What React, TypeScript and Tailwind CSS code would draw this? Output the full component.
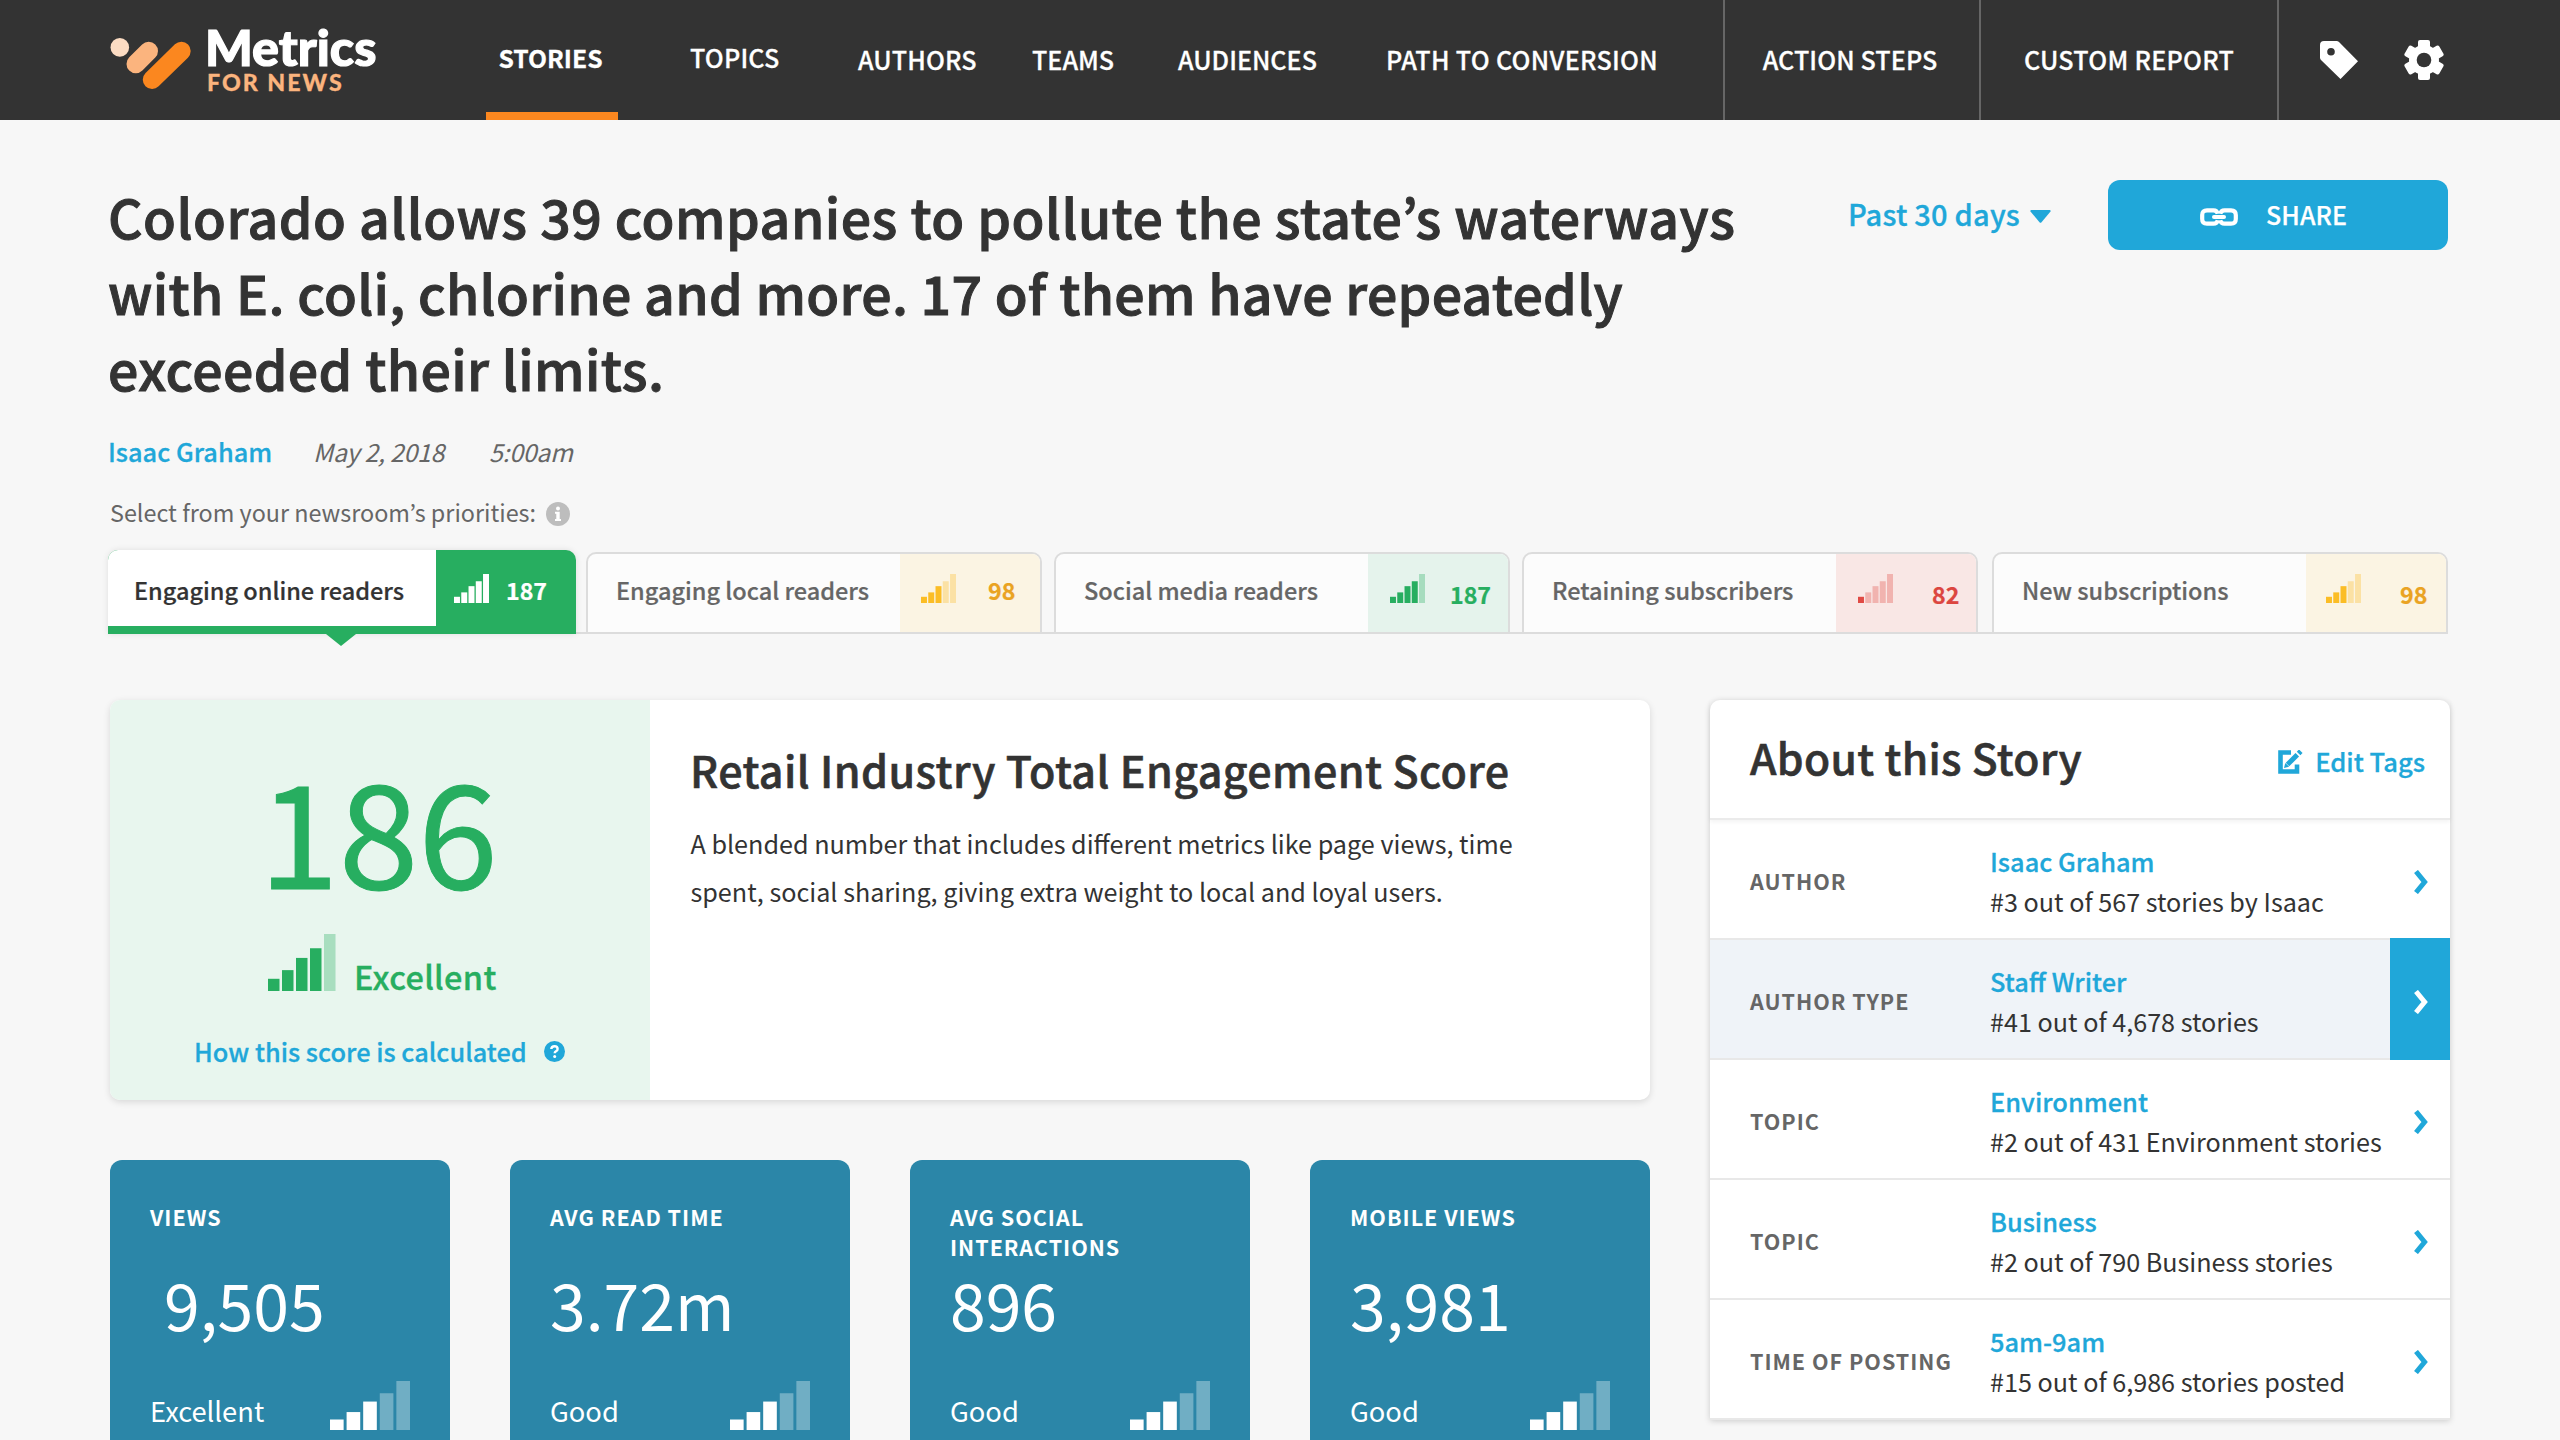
import type { ReactNode } from "react";

const BAR_HEIGHTS = [12, 20.5, 32.5, 42, 56];

// Sits between the medium and bold cuts of the family.
const SEMI = "font-medium [-webkit-text-stroke-width:0.01em] ";

function Bars({ filled, className }: { filled: number; className: string }) {
  return (
    <svg viewBox="0 0 67.5 56" preserveAspectRatio="none" className={"shrink-0 " + className} fill="currentColor">
      {BAR_HEIGHTS.map((h, i) => (
        <rect key={i} x={i * 14} y={56 - h} width="11.5" height={h} opacity={i < filled ? 1 : 0.33} />
      ))}
    </svg>
  );
}

function Logo() {
  return (
    <div className="flex w-[486px] pl-[110px]">
      <svg className="mt-[38px] h-[52px] w-[82px]" viewBox="0 0 82 52" strokeLinecap="round" strokeWidth="18.6">
        <circle cx="9.8" cy="9.4" r="9.3" fill="#fcdcc3" />
        <path d="M38.7 13 L25.8 25.9" stroke="#fbb47e" />
        <path d="M71.4 13 L42.1 41.7" stroke="#fb871f" />
      </svg>
      <div className="ml-[13px] mt-[25px] font-['Lato',sans-serif]">
        <div className="text-[50.3px] font-black leading-[44px] text-white [-webkit-text-stroke-width:1.2px]">Metrics</div>
        <div className="mt-px pl-[2px] text-[23.2px] font-black leading-[24px] tracking-[2px] text-[#fbb47e]">FOR NEWS</div>
      </div>
    </div>
  );
}

function TagIcon() {
  return (
    <svg className="h-[38px] w-[38px]" viewBox="0 0 38 38">
      <path
        fillRule="evenodd"
        fill="#fff"
        d="M4 0H16.500Q18 0 19 1L38 20.300 20.500 38 1 19Q0 18 0 16.500V4Q0 0 4 0ZM11 7a3.800 3.800 0 1 0 0 7.600a3.800 3.800 0 1 0 0-7.600Z"
      />
    </svg>
  );
}

function GearIcon() {
  return (
    <svg className="h-[40px] w-[40px]" viewBox="-20 -20 40 40" fill="#fff">
      <circle r="15" />
      {[0, 60, 120].map((a) => (
        <rect key={a} x="-6" y="-20" width="12" height="40" rx="2" transform={`rotate(${a})`} />
      ))}
      <circle r="7.3" fill="#333" />
    </svg>
  );
}

function Header() {
  return (
    <header className={SEMI + "flex h-[120px] bg-[#333] text-[25.1px] text-white"}>
      <Logo />
      <nav className="grid w-[1237px] grid-cols-[204px_168px_174px_146px_208px_auto] items-center whitespace-nowrap">
        <div className="flex h-[120px] w-[132px] items-center justify-center border-b-8 border-[#fb871f] pr-[3px] pt-[4px] text-[24.7px] font-bold">
          STORIES
        </div>
        <div className="pb-[4px] tracking-[0.2px]">TOPICS</div>
        <div className="tracking-[0.1px]">AUTHORS</div>
        <div>TEAMS</div>
        <div>AUDIENCES</div>
        <div className="tracking-[0.3px]">PATH TO CONVERSION</div>
      </nav>
      <div className="flex w-[256px] items-center justify-center border-l-2 border-[#666] pr-[4px] tracking-[0.1px]">ACTION STEPS</div>
      <div className="flex w-[298px] items-center justify-center border-l-2 border-[#666] tracking-[0.26px]">CUSTOM REPORT</div>
      <div className="flex flex-1 items-center gap-[46px] border-l-2 border-[#666] pl-[41px]">
        <TagIcon />
        <GearIcon />
      </div>
    </header>
  );
}

function Story() {
  return (
    <section className="flex justify-between">
      <div>
        <h1 className="mt-[58px] w-[1660px] whitespace-nowrap text-[53.6px] font-medium leading-[76px] tracking-[0.4px] text-[#333] [-webkit-text-stroke-width:1px]">
          <span className="tracking-[0.5px]">Colorado allows 39 companies to pollute the state’s waterways</span>
          <br />
          <span className="tracking-[0.33px]">with E. coli, chlorine and more. 17 of them have repeatedly</span>
          <br />
          exceeded their limits.
        </h1>
        <div className="mt-[27px] flex text-[24.8px] leading-[36px] text-[#666]">
          <span className={SEMI + "w-[205px] text-[25.35px] text-[#20a7d9]"}>Isaac Graham</span>
          <span className="w-[176px] italic tracking-[-0.25px]">May 2, 2018</span>
          <span className="italic tracking-[-0.25px]">5:00am</span>
        </div>
        <div className="mt-[27px] flex h-[32px] pl-[2px] text-[23.36px] leading-[32px] text-[#666]">
          Select from your newsroom’s priorities:
          <svg className="ml-[10px] mt-[6px] h-[24px] w-[24px]" viewBox="0 0 24 24">
            <circle cx="12" cy="12" r="12" fill="#bdbdbd" />
            <circle cx="12" cy="6.500" r="2" fill="#fff" />
            <path d="M9 9.800H13.700V17H15V19H9V17H10.300V11.800H9Z" fill="#fff" />
          </svg>
        </div>
      </div>
      <div className="mt-[60px] flex h-[70px] items-center">
        <span className={SEMI + "pb-[3px] text-[29px] tracking-[0.2px] text-[#20a7d9]"}>Past 30 days</span>
        <svg className="ml-[10px] mt-[3px] h-[13px] w-[21px]" viewBox="0 0 21 13" fill="#20a7d9">
          <path d="M1 0H20Q21 0.500 20.500 1.500L11.500 12.300Q10.500 13.300 9.500 12.300L0.500 1.500Q0 0.500 1 0Z" />
        </svg>
        <button className="ml-[57px] flex h-[70px] w-[340px] items-center rounded-[12px] bg-[#20a7d9] pl-[92px] text-white">
          <svg className="mt-[3px] h-[18px] w-[38px]" viewBox="0 0 38 18" fill="none" stroke="#fff">
            <path d="M17.800 5.800Q17 2.300 13.500 2.300H7Q2.200 2.300 2.200 7V11Q2.200 15.700 7 15.700H13.500Q17 15.700 17.800 12.200" strokeWidth="4.200" />
            <path d="M20.200 5.800Q21 2.300 24.500 2.300H31Q35.800 2.300 35.800 7V11Q35.800 15.700 31 15.700H24.500Q21 15.700 20.200 12.200" strokeWidth="4.200" />
            <path d="M14 9H24" strokeWidth="4" strokeLinecap="round" />
          </svg>
          <span className={SEMI + "ml-[28px] text-[25px] tracking-[0.1px]"}>SHARE</span>
        </button>
      </div>
    </section>
  );
}

type TabProps = {
  label: string;
  score: string;
  filled: number;
  gap: string;
  box: string;
  panel: string;
  bars: string;
  value: string;
};

const TABS: TabProps[] = [
  { label: "Engaging local readers", score: "98", filled: 3, gap: "w-[10px]", box: "pl-[28px]", panel: "w-[140px] bg-[#fbf4e3] pl-[21px]", bars: "text-[#fbbd25]", value: "ml-[32px] mt-[-5px] text-[#eaa322]" },
  { label: "Social media readers", score: "187", filled: 4, gap: "w-[12px]", box: "pl-[28px]", panel: "w-[140px] bg-[#e5f3ec] pl-[22px]", bars: "text-[#27ae60]", value: "ml-[25px] mt-[2px] text-[#27ae60]" },
  { label: "Retaining subscribers", score: "82", filled: 1, gap: "w-[12px]", box: "pl-[28px]", panel: "w-[140px] bg-[#f9e7e5] pl-[22px]", bars: "text-[#e04a44]", value: "ml-[39px] mt-[2px] text-[#dc4640]" },
  { label: "New subscriptions", score: "98", filled: 3, gap: "w-[14px]", box: "pl-[28px]", panel: "w-[140px] bg-[#fbf4e3] pl-[20px]", bars: "text-[#fbbd25]", value: "ml-[39px] mt-[2px] text-[#eaa322]" },
];

function Tabs() {
  return (
    <div className={SEMI + "mt-[22px] flex h-[84px] items-end text-[23.5px]"}>
      <div className="relative flex h-[84px] w-[468px] rounded-t-[10px] bg-[#27ae60] shadow-[0_0_6px_rgba(0,0,0,0.10)]">
        <div className="flex h-[76px] w-[328px] items-center rounded-tl-[10px] bg-white pl-[26px] pt-[5px] text-[#333]">Engaging online readers</div>
        <div className="flex w-[140px] items-center pl-[18px] text-white">
          <Bars filled={5} className="mt-[-7px] h-[29px] w-[35px]" />
          <span className="ml-[17px] mt-[-3px] text-[23.2px] font-bold">187</span>
        </div>
        <div className="absolute left-[218px] top-[84px] h-0 w-0 border-x-[15px] border-t-[12px] border-x-transparent border-t-[#27ae60]" />
      </div>
      {TABS.map((t, i) => (
        <div key={i} className="flex items-end">
          <div className={"h-[2px] bg-[#dcdcdc] " + t.gap} />
          <div className={"flex h-[82px] w-[456px] justify-between rounded-t-[10px] border-2 border-[#dcdcdc] bg-[#fcfcfc] text-[#666] " + t.box}>
            <span className="flex items-center pb-[5px]">{t.label}</span>
            <div className={"flex items-center rounded-tr-[8px] " + t.panel}>
              <Bars filled={t.filled} className={"mt-[-9px] h-[29px] w-[35px] " + t.bars} />
              <span className={"text-[23.2px] font-bold " + t.value}>{t.score}</span>
            </div>
          </div>
        </div>
      ))}
    </div>
  );
}

function ScoreCard() {
  return (
    <section className="flex h-[400px] overflow-hidden rounded-[10px] bg-white shadow-[0_2px_7px_rgba(0,0,0,0.13)]">
      <div className="w-[540px] bg-[#e8f6ee] pt-[57px] text-[#27ae60]">
        <div className="pl-[149px] text-[143.5px] leading-[140px] [-webkit-text-stroke-width:1px]">186</div>
        <div className="mt-[37px] flex h-[62px] items-end pl-[158px]">
          <Bars filled={4} className="mb-[5px] h-[57px] w-[67.5px]" />
          <span className={SEMI + "ml-[18.5px] text-[32.5px] leading-[40px] tracking-[0.3px]"}>Excellent</span>
        </div>
        <div className={SEMI + "mt-[39px] flex items-center pl-[84px] text-[25.35px] leading-[32px] text-[#20a7d9]"}>
          How this score is calculated
          <svg className="ml-[17px] h-[21px] w-[21px]" viewBox="0 0 21 21">
            <circle cx="10.500" cy="10.500" r="10.500" fill="#20a7d9" />
            <path d="M7.300 8Q7.500 5.300 10.500 5.300Q13.600 5.300 13.600 7.900Q13.600 9.300 12 10.200Q10.700 11 10.700 12.300" fill="none" stroke="#fff" strokeWidth="2.400" />
            <circle cx="10.700" cy="15.600" r="1.500" fill="#fff" />
          </svg>
        </div>
      </div>
      <div className="pl-[40px] pt-[41px] text-[#333]">
        <h2 className="whitespace-nowrap text-[43px] font-medium leading-[56px] tracking-[0.4px] [-webkit-text-stroke-width:0.6px]">
          Retail Industry Total Engagement Score
        </h2>
        <p className="mt-[22px] whitespace-nowrap pl-[0.5px] text-[25.17px] leading-[48px]">
          A blended number that includes different metrics like page views, time
          <br />
          spent, social sharing, giving extra weight to local and loyal users.
        </p>
      </div>
    </section>
  );
}

function Metric({ label, value, rating, indent = "" }: { label: ReactNode; value: string; rating: string; indent?: string }) {
  return (
    <div className="h-[340px] w-[340px] rounded-[12px] bg-[#2b86a8] px-[40px] pt-[42px] text-white">
      <div className="h-[60px] text-[21.5px] font-bold leading-[30px] tracking-[1px]">{label}</div>
      <div className={"mt-[6px] text-[64.3px] leading-[70px] " + indent}>{value}</div>
      <div className="mt-[43px] flex h-[49px] items-end justify-between">
        <span className="mb-[2px] text-[27.3px] leading-[36px]">{rating}</span>
        <Bars filled={3} className="h-[49px] w-[80px]" />
      </div>
    </div>
  );
}

const ROWS = [
  { label: "AUTHOR", title: "Isaac Graham", detail: "#3 out of 567 stories by Isaac" },
  { label: "AUTHOR TYPE", title: "Staff Writer", detail: "#41 out of 4,678 stories", active: true },
  { label: "TOPIC", title: "Environment", detail: "#2 out of 431 Environment stories" },
  { label: "TOPIC", title: "Business", detail: "#2 out of 790 Business stories" },
  { label: "TIME OF POSTING", title: "5am-9am", detail: "#15 out of 6,986 stories posted" },
];

function About() {
  return (
    <aside className="h-[720px] w-[740px] rounded-t-[10px] bg-white shadow-[0_1px_6px_rgba(0,0,0,0.18)]">
      <div className="flex h-[120px] items-center border-b-2 border-[#ebebeb] pl-[40px] pr-[25px] shadow-[0_2px_4px_rgba(0,0,0,0.05)]">
        <h2 className="flex-1 pb-[4px] text-[42.6px] font-medium tracking-[0.35px] text-[#333] [-webkit-text-stroke-width:0.6px]">About this Story</h2>
        <svg className="mt-[6px] h-[24px] w-[25px]" viewBox="0 0 25 24" fill="none" stroke="#20a7d9">
          <path d="M13 2.500H2.500V21.500H19V14.500" strokeWidth="4.600" />
          <path d="M9.500 14.500L19.300 4.700" strokeWidth="5" />
          <path d="M20.600 3.400L22.800 1.200" strokeWidth="5" />
          <path d="M7.300 12.900L11.100 16.700L6 18Z" fill="#20a7d9" stroke="none" />
        </svg>
        <span className={SEMI + "ml-[12px] pt-[5px] text-[25.6px] text-[#20a7d9]"}>Edit Tags</span>
      </div>
      {ROWS.map((r, i) => (
        <div key={i} className={"flex h-[120px] border-b-2 border-[#e8e8e8] pl-[40px] " + (r.active ? "bg-[#eff3f8]" : "")}>
          <div className="flex w-[240px] items-center pt-[5px] text-[21.5px] font-bold tracking-[1px] text-[#666]">{r.label}</div>
          <div className="w-[400px] whitespace-nowrap pt-[21px] text-[25.17px] leading-[40px] text-[#333]">
            <div className={SEMI + "text-[25.4px] text-[#20a7d9]"}>{r.title}</div>
            <div>{r.detail}</div>
          </div>
          <div className={"mt-[-2px] flex h-[122px] w-[60px] items-center pl-[24px] pt-[6px] " + (r.active ? "bg-[#20a7d9] text-white" : "text-[#20a7d9]")}>
            <svg className="h-[24px] w-[14px]" viewBox="0 0 14 24" fill="none" stroke="currentColor" strokeWidth="5">
              <path d="M2 1.500L10.600 12L2 22.500" />
            </svg>
          </div>
        </div>
      ))}
    </aside>
  );
}

export default function App() {
  return (
    <div className="h-[1440px] w-[2560px] overflow-hidden bg-[#f7f7f7] font-['Noto_Sans_CJK_KR','Noto_Sans',sans-serif]">
      <Header />
      <main className="pl-[108px] pr-[112px]">
        <Story />
        <Tabs />
        <div className="-mr-[2px] mt-[66px] flex justify-between pl-[2px]">
          <div className="w-[1540px]">
            <ScoreCard />
            <div className="mt-[60px] flex justify-between">
              <Metric label="VIEWS" value="9,505" rating="Excellent" indent="pl-[14px]" />
              <Metric label="AVG READ TIME" value="3.72m" rating="Good" />
              <Metric label={<>AVG SOCIAL<br />INTERACTIONS</>} value="896" rating="Good" />
              <Metric label="MOBILE VIEWS" value="3,981" rating="Good" />
            </div>
          </div>
          <About />
        </div>
      </main>
    </div>
  );
}
